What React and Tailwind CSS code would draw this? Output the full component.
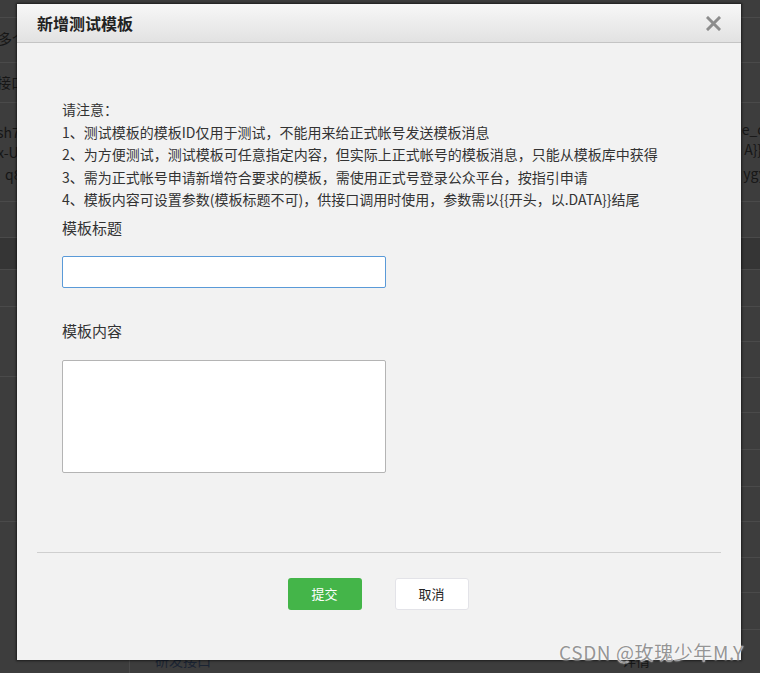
import React from "react";

const FONT = { fontFamily: '"Noto Sans CJK SC", "Noto Sans", sans-serif' };

function BgRow({ h, children, className = "" }) {
  return (
    <div className={`border-b border-[#4a4a4a] flex ${h} ${className}`}>{children}</div>
  );
}

function Background() {
  return (
    <div className="bg-[#3d3d3d] text-[#161616] text-[14px] h-[673px] overflow-hidden">
      <BgRow h="h-[18px]" />
      <BgRow h="h-[45px]" className="items-center">
        <span className="-ml-[2px] mt-[-4px]">多个</span>
      </BgRow>
      <BgRow h="h-[40px]" className="items-center">
        <span className="-ml-[3px]">接口名称</span>
      </BgRow>
      <BgRow h="h-[99px]" className="justify-between pt-[19px]">
        <div className="leading-[20px] -ml-[3px]">
          <div>sh7</div>
          <div>x-U</div>
          <div className="pl-[8px] mt-[2px]">q8</div>
        </div>
        <div className="leading-[20px] text-right -mr-[6px]">
          <div className="-mt-[3px]">e_d</div>
          <div>A}},</div>
          <div className="mt-[4px]">ygy</div>
        </div>
      </BgRow>
      <BgRow h="h-[36px]" />
      <div className="h-[32px] bg-[#353535] border-b border-[#4a4a4a]" />
      <BgRow h="h-[37px]" />
      <div className="flex">
        <div className="w-[130px] border-r border-[#4a4a4a]">
          <div className="h-[70px] border-b border-[#4a4a4a]" />
          <div className="h-[145px] border-b border-[#4a4a4a]" />
          <div className="h-[200px]" />
        </div>
        <div className="flex-1">
          {[35, 36, 35, 37, 37, 35, 36, 35, 37].map((hh, i) => (
            <div
              key={i}
              style={{ height: hh }}
              className="border-b border-[#4a4a4a]"
            />
          ))}
          <div className="flex justify-between pt-[20px] pl-[25px] pr-[110px]">
            <span className="text-[#1b2433]">研发接口</span>
            <span>详情</span>
          </div>
        </div>
      </div>
    </div>
  );
}

function CloseIcon() {
  return (
    <svg width="15" height="15" viewBox="0 0 15 15">
      <path
        d="M2 2 L13 13 M13 2 L2 13"
        stroke="#8c8c8c"
        strokeWidth="3"
        strokeLinecap="square"
      />
    </svg>
  );
}

function Modal() {
  return (
    <div className="absolute left-[17px] top-[4px] w-[724px] h-[656px] bg-[#f2f2f2] shadow-[0_0_2px_1px_rgba(0,0,0,0.55)] flex flex-col">
      <div className="h-[39px] shrink-0 bg-gradient-to-b from-[#f7f7f7] to-[#e2e2e2] border-b border-[#c4c4c4] flex items-center justify-between pl-[20px] pr-[20px]">
        <h3 className="text-[16px] font-bold text-[#222]">新增测试模板</h3>
        <button className="mt-[1px]">
          <CloseIcon />
        </button>
      </div>

      <div className="px-[45px] pt-[55px] text-[#333]">
        <div className="text-[14px] leading-[22.6px]">
          <p>请注意：</p>
          <p>1、测试模板的模板ID仅用于测试，不能用来给正式帐号发送模板消息</p>
          <p>2、为方便测试，测试模板可任意指定内容，但实际上正式帐号的模板消息，只能从模板库中获得</p>
          <p>3、需为正式帐号申请新增符合要求的模板，需使用正式号登录公众平台，按指引申请</p>
          <p>4、模板内容可设置参数(模板标题不可)，供接口调用时使用，参数需以{"{{"}开头，以.DATA{"}}"}结尾</p>
        </div>

        <label className="block text-[15px] leading-[20px] mt-[7px]">模板标题</label>
        <input
          type="text"
          className="block mt-[18px] w-[324px] h-[32px] bg-white border border-[#5a9ad8] rounded-[2px] outline-none"
        />

        <label className="block text-[15px] leading-[20px] mt-[33px]">模板内容</label>
        <textarea className="block mt-[19px] w-[324px] h-[113px] bg-white border border-[#b4b4b4] rounded-[2px] outline-none resize-none" />
      </div>

      <div className="mx-[20px] mt-[79px] border-t border-[#cfcfcf]" />

      <div className="flex justify-center gap-[33px] mt-[25px] pr-[2px]">
        <button className="w-[74px] h-[32px] bg-[#44b549] rounded-[3px] text-white text-[13px]">
          提交
        </button>
        <button className="w-[74px] h-[32px] bg-white border border-[#e3e3e8] rounded-[3px] text-[#222] text-[13px]">
          取消
        </button>
      </div>
    </div>
  );
}

export default function App() {
  return (
    <div className="relative w-[760px] h-[673px] overflow-hidden" style={FONT}>
      <Background />
      <Modal />
      <div className="absolute left-[559px] top-[640px] text-[19px] leading-[24px] tracking-[0.6px] text-[#959595] [text-shadow:0_0_2px_#fff,0_0_1px_#fff] whitespace-nowrap">
        CSDN @玫瑰少年M.Y
      </div>
    </div>
  );
}
